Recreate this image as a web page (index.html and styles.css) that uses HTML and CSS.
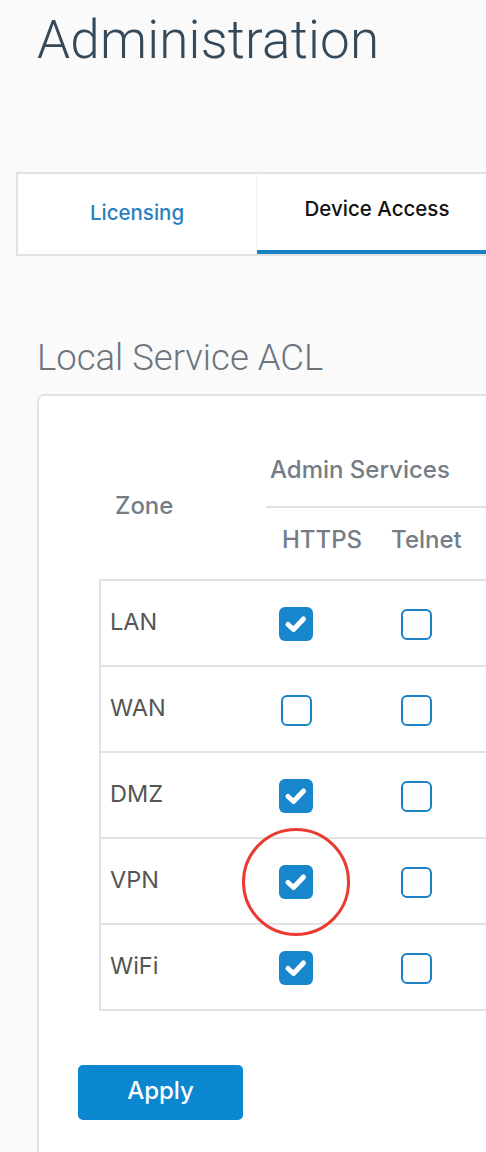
FILE: index.html
```html
<!DOCTYPE html>
<html lang="en">
<head>
    <meta charset="UTF-8">
    <meta name="viewport" content="width=device-width, initial-scale=1.0">
    <title>Administration</title>
    <link rel="stylesheet" href="styles.css">
</head>
<body>

<h1 class="page-title">Administration</h1>

<div class="tabs">
    <div class="tab">Licensing</div>
    <div class="tab active">Device Access</div>
</div>

<h2 class="section-title">Local Service ACL</h2>

<div class="card">
    <div class="acl-head">
        <div class="zone-head">Zone</div>
        <div class="services-head">
            <div class="group-label">Admin Services</div>
            <div class="service-labels">
                <span>HTTPS</span>
                <span>Telnet</span>
            </div>
        </div>
    </div>

    <div class="acl-table">
        <div class="acl-row">
            <div class="zone">LAN</div>
            <div class="cell"><span class="check on"><svg viewBox="0 0 34 34"><path d="M9 17.5 L14.5 22.5 L24.5 12"/></svg></span></div>
            <div class="cell"><span class="check"></span></div>
        </div>
        <div class="acl-row">
            <div class="zone">WAN</div>
            <div class="cell"><span class="check"></span></div>
            <div class="cell"><span class="check"></span></div>
        </div>
        <div class="acl-row">
            <div class="zone">DMZ</div>
            <div class="cell"><span class="check on"><svg viewBox="0 0 34 34"><path d="M9 17.5 L14.5 22.5 L24.5 12"/></svg></span></div>
            <div class="cell"><span class="check"></span></div>
        </div>
        <div class="acl-row">
            <div class="zone">VPN</div>
            <div class="cell">
                <span class="check on"><svg viewBox="0 0 34 34"><path d="M9 17.5 L14.5 22.5 L24.5 12"/></svg></span>
                <span class="highlight"></span>
            </div>
            <div class="cell"><span class="check"></span></div>
        </div>
        <div class="acl-row">
            <div class="zone">WiFi</div>
            <div class="cell"><span class="check on"><svg viewBox="0 0 34 34"><path d="M9 17.5 L14.5 22.5 L24.5 12"/></svg></span></div>
            <div class="cell"><span class="check"></span></div>
        </div>
    </div>

    <button class="apply-btn">Apply</button>
</div>

</body>
</html>
```

FILE: styles.css
```css
body {
    margin: 0;
    height: 1152px;
    overflow: hidden;
    background-color: #fafafb;
    font-family: Inter, "Liberation Sans", Arial, sans-serif;
}

.page-title {
    margin: 0;
    padding: 8px 0 0 37px;
    font-family: Roboto, sans-serif;
    font-size: 53px;
    font-weight: 300;
    line-height: 64px;
    color: #34495a;
    letter-spacing: 0.2px;
}

/* tabs */
.tabs {
    display: flex;
    margin: 100px 0 0 16px;
    border: 2px solid #e2e2e2;
    border-right: none;
    background-color: #fff;
    overflow: hidden;
}

.tab {
    flex: 0 0 240px;
    height: 80px;
    display: flex;
    align-items: center;
    justify-content: center;
    padding-bottom: 4px;
    box-sizing: border-box;
    font-size: 20.5px;
    font-weight: 500;
    color: #2b7fc0;
}

.tab:first-child {
    flex-basis: 239px;
    border-right: 1px solid #f2f2f2;
}

.tab.active {
    color: #111;
    padding-bottom: 8px;
    border-bottom: 4px solid #1a80c4;
}

.section-title {
    margin: 80px 0 0 37px;
    font-family: Roboto, sans-serif;
    font-size: 36.5px;
    font-weight: 300;
    line-height: 44px;
    color: #6c757e;
}

/* card */
.card {
    margin: 14px 0 0 37px;
    height: 800px;
    border: 2px solid #e2e2e2;
    border-right: none;
    border-radius: 7px 0 0 0;
    background-color: #fff;
    overflow: hidden;
}

.acl-head {
    display: flex;
    margin-left: 60px;
    color: #747d86;
    font-size: 24px;
    font-weight: 500;
}

.zone-head {
    width: 151px;
    padding: 98px 0 0 16px;
    line-height: 24px;
}

.services-head {
    flex: 1;
}

.group-label {
    height: 112px;
    box-sizing: border-box;
    padding: 62px 0 0 4px;
    line-height: 24px;
    border-bottom: 2px solid #e2e2e2;
}

.service-labels {
    display: flex;
    gap: 29px;
    height: 71px;
    box-sizing: border-box;
    padding: 20px 0 0 16px;
    line-height: 24px;
}

/* table */
.acl-table {
    margin-left: 60px;
    border-left: 2px solid #e2e2e2;
    border-top: 2px solid #e2e2e2;
}

.acl-row {
    display: flex;
    align-items: center;
    height: 84px;
    border-bottom: 2px solid #e2e2e2;
}

.zone {
    width: 135px;
    box-sizing: border-box;
    padding: 0 0 4px 9px;
    font-size: 23.5px;
    color: #555;
}

.cell {
    position: relative;
    width: 120px;
    display: flex;
    justify-content: center;
    padding-top: 2px;
}

.check {
    display: block;
    width: 31px;
    height: 31px;
    box-sizing: border-box;
    border: 2px solid #1c80c4;
    border-radius: 6px;
    background-color: #fff;
}

.check.on {
    width: 34px;
    height: 34px;
    border: none;
    background-color: #1786cd;
}

.check svg {
    display: block;
    width: 34px;
    height: 34px;
    fill: none;
    stroke: #fff;
    stroke-width: 5;
    stroke-linecap: round;
    stroke-linejoin: round;
}

.highlight {
    position: absolute;
    left: 50%;
    top: 50%;
    width: 108px;
    height: 108px;
    margin: -53px 0 0 -54px;
    box-sizing: border-box;
    border: 3px solid #e93b31;
    border-radius: 50%;
}

.apply-btn {
    display: block;
    margin: 54px 0 0 39px;
    width: 165px;
    height: 55px;
    border: none;
    border-radius: 5px;
    background-color: #0b87cf;
    color: #fff;
    font-family: inherit;
    font-size: 24px;
    font-weight: 500;
    padding: 0 0 4px;
}
```
